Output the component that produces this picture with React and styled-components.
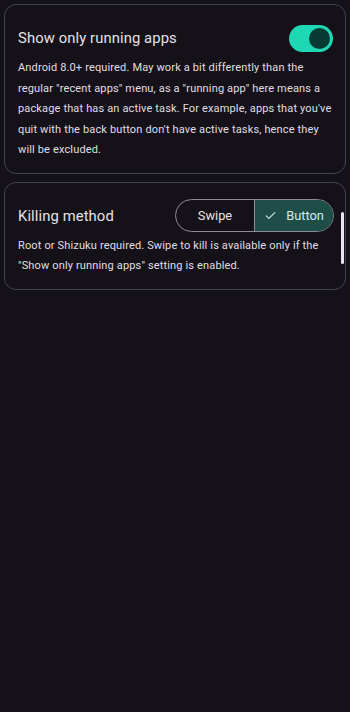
import React, { useState } from 'react'
import styled, { createGlobalStyle } from 'styled-components'

const GlobalStyle = createGlobalStyle`
    html, body {
        margin : 0;
        padding : 0;
        background : #141218;
    }
    body {
        font-family : Roboto, "Noto Sans", sans-serif;
        color : #e6e1e5;
    }
`

function App() {

    const [runningOnly, setRunningOnly] = useState(true)
    const [method, setMethod] = useState('button')

    return (
        <Page>
            <GlobalStyle />
            <Card>
                <Row>
                    <Title>Show only running apps</Title>
                    <Switch on={runningOnly} onClick={() => setRunningOnly(!runningOnly)}>
                        <Thumb on={runningOnly} />
                    </Switch>
                </Row>
                <Description>
                    Android 8.0+ required. May work a bit differently than the regular "recent apps" menu, as a "running app" here means a package that has an active task. For example, apps that you've quit with the back button don't have active tasks, hence they will be excluded.
                </Description>
            </Card>
            <Card>
                <Row>
                    <Title>Killing method</Title>
                    <Segmented>
                        <Segment selected={method === 'swipe'} onClick={() => setMethod('swipe')}>
                            {method === 'swipe' && <Check />}
                            Swipe
                        </Segment>
                        <Segment selected={method === 'button'} onClick={() => setMethod('button')}>
                            {method === 'button' && <Check />}
                            Button
                        </Segment>
                    </Segmented>
                </Row>
                <Description>
                    Root or Shizuku required. Swipe to kill is available only if the "Show only running apps" setting is enabled.
                </Description>
                <Scrollbar />
            </Card>
        </Page>
    )
}

function Check() {
    return (
        <svg width="13" height="13" viewBox="0 0 24 24" fill="none" stroke="currentColor" strokeWidth="2" strokeLinecap="round" strokeLinejoin="round">
            <path d="M4 12.5l5 5L20 6.5" />
        </svg>
    )
}

const Page = styled.div`
    min-height : 712px;
    box-sizing : border-box;
    padding : 4px 4px;
    display : flex;
    flex-direction : column;
    gap : 8px;
`

const Card = styled.div`
    position : relative;
    border : 1px solid #45434a;
    border-radius : 12px;
    padding : 16px 13px 12px 13px;
`

const Row = styled.div`
    display : flex;
    align-items : center;
    justify-content : space-between;
    min-height : 34px;
`

const Title = styled.div`
    font-size : 14.8px;
    color : #e6e1e5;
    letter-spacing : 0.1px;
`

const Switch = styled.div`
    width : 44px;
    height : 27px;
    border-radius : 14px;
    background : ${props => props.on ? '#1ed7b5' : '#36343b'};
    display : flex;
    align-items : center;
    justify-content : ${props => props.on ? 'flex-end' : 'flex-start'};
    padding : 0 3px;
    box-sizing : border-box;
    margin-right : -1px;
    cursor : pointer;
`

const Thumb = styled.div`
    width : 21px;
    height : 21px;
    border-radius : 50%;
    background : ${props => props.on ? '#073b34' : '#938f99'};
`

const Description = styled.p`
    margin : 3px 0 0 0;
    font-size : 11px;
    line-height : 20.5px;
    color : #e2dee4;
    letter-spacing : 0.15px;
`

const Segmented = styled.div`
    display : flex;
    width : 159px;
    height : 33px;
    border : 1px solid #8e8b92;
    border-radius : 17px;
    box-sizing : border-box;
    overflow : hidden;
    margin-right : -2px;
`

const Segment = styled.div`
    flex : 1;
    display : flex;
    align-items : center;
    justify-content : center;
    gap : 9px;
    font-size : 12.8px;
    cursor : pointer;
    background : ${props => props.selected ? '#1f4d48' : 'transparent'};
    color : ${props => props.selected ? '#cfeee8' : '#e6e1e5'};

    & + & {
        border-left : 1px solid #8e8b92;
    }
`

const Scrollbar = styled.div`
    position : absolute;
    right : 1px;
    top : 29px;
    width : 3px;
    height : 52px;
    border-radius : 2px;
    background : #e8e6ec;
`

export default App
